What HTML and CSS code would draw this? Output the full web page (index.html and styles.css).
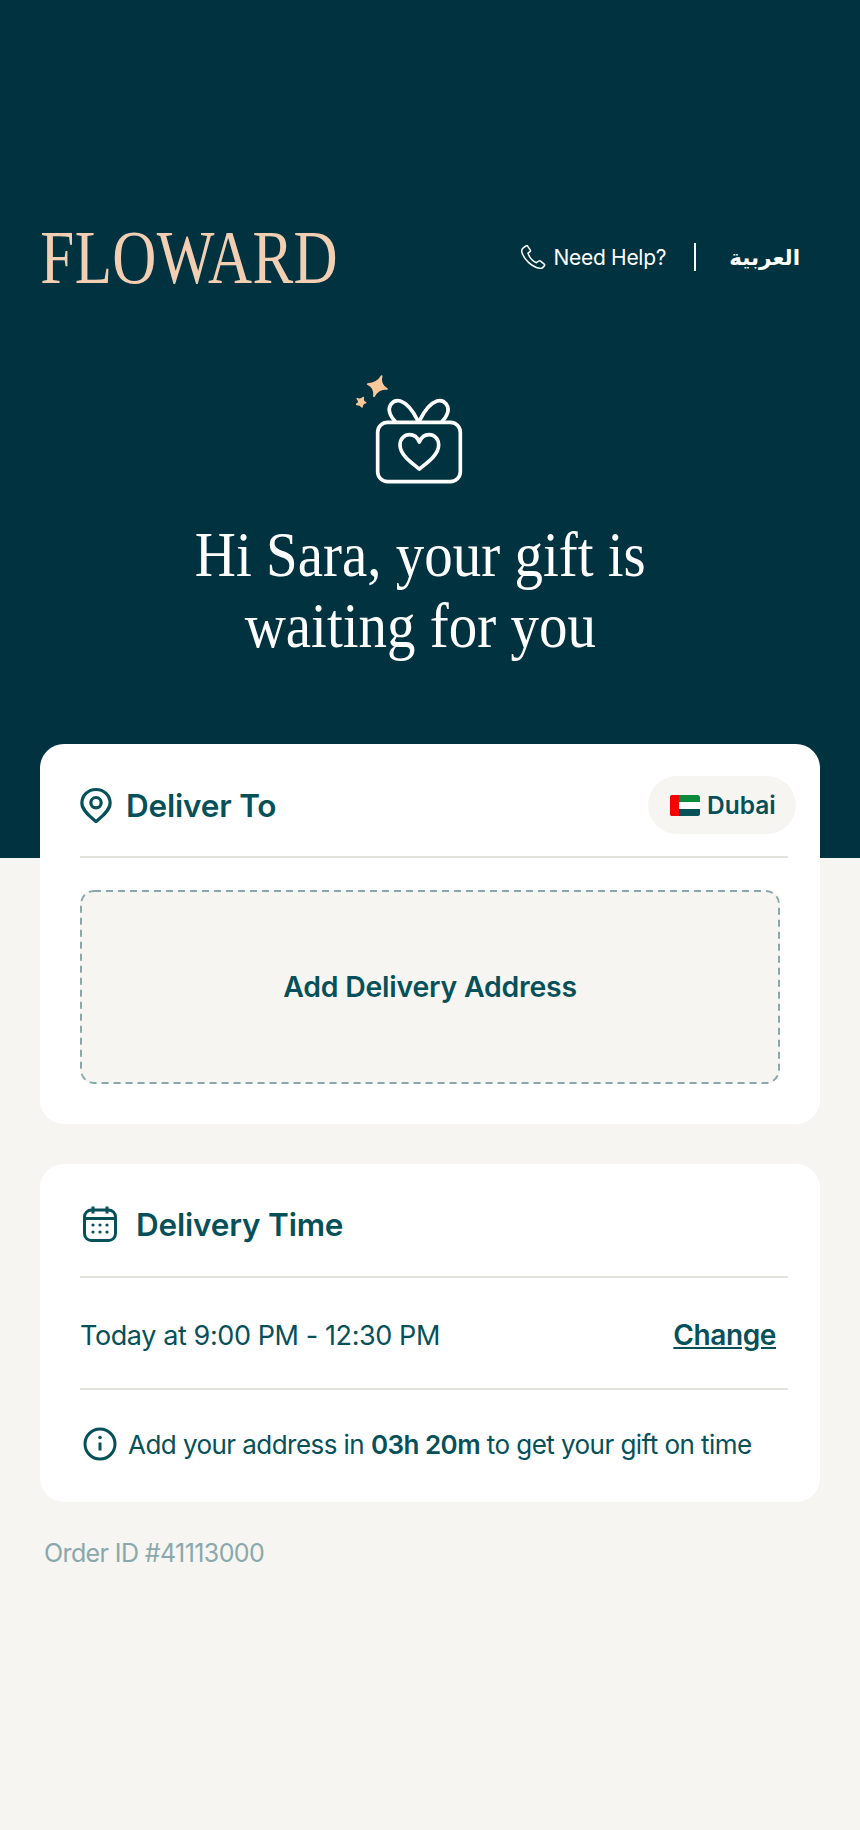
FILE: index.html
```html
<!DOCTYPE html>
<html lang="en">
<head>
<meta charset="utf-8">
<title>Floward</title>
<link rel="stylesheet" href="styles.css">
</head>
<body>
<div class="page">
  <section class="hero">
    <header class="topbar">
      <svg class="logo" width="302" height="90" viewBox="0 0 381 90" preserveAspectRatio="none"><text x="3" y="71" textLength="375" class="logo-text">FLOWARD</text></svg>
      <div class="actions">
        <svg class="phone" width="26" height="24" viewBox="0 0 26 24" fill="none" stroke="#fff" stroke-width="1.5" stroke-linejoin="round"><path d="M2 3.2 5 .9c.7-.4 1.4-.2 1.8.4l2.4 3.6c.4.6.3 1.3-.2 1.7L7 8.200c1.300 4 4.500 7.800 8.400 9.500l2.300-1.700c.6-.4 1.300-.4 1.800.1l3.700 3c.5.5.6 1.200.1 1.800l-1.700 1.700c-.8.800-2 1-3.200.7C10 21.500 2.800 14 .9 7.300.5 5.700 1 4 2 3.200Z"/></svg>
        <span class="help">Need Help?</span>
        <span class="sep"></span>
        <span class="lang" lang="ar" dir="rtl">العربية</span>
      </div>
    </header>
    <svg class="gift" width="140" height="130" viewBox="0 0 420 390" fill="none" stroke="#fff" stroke-width="11" stroke-linejoin="round" stroke-linecap="round">
      <path class="spark" d="M125 33Q118 58 141 72Q116 68 102 94Q106 68 83 57Q112 56 125 33Z"/>
      <path class="spark" d="M70 98Q66 108 77 113Q67 114 66 126Q62 118 50 118Q62 112 52 101Q62 106 70 98Z"/>
      <rect x="113" y="172" width="248" height="178" rx="30"/>
      <path d="M233 166c-12-24-28-50-52-58-24-6-40 18-30 40 3 8 8 14 14 20"/>
      <path d="M239 166c12-24 28-50 52-58 24-6 40 18 30 40-3 8-8 14-14 20"/>
      <path d="M238 312c-22-18-58-42-58-72 0-18 13-31 29-31 13 0 23 8 29 22 6-14 16-22 29-22 16 0 29 13 29 31 0 30-36 54-58 72Z"/>
    </svg>
    <h1 class="title">Hi Sara, your gift is<br>waiting for you</h1>
  </section>

  <main class="cards">
    <section class="card">
      <div class="card-head">
        <svg class="icon pin" width="32" height="37" viewBox="0 0 34 38" fill="none" stroke="#06505a" stroke-width="3.400"><path d="M17 36C11 31 2 24 2 16.500 2 8 8.600 2 17 2s15 6 15 14.500C32 24 23 31 17 36Z" stroke-linejoin="round"/><circle cx="17" cy="16" r="5.500"/></svg>
        <h2 class="card-title">Deliver To</h2>
        <div class="pill">
          <svg class="flag" width="30" height="21" viewBox="0 0 30 21"><defs><clipPath id="flag-clip"><rect width="30" height="21" rx="2.500"/></clipPath></defs><g clip-path="url(#flag-clip)"><rect width="30" height="7" fill="#0b8a3e"/><rect y="7" width="30" height="7" fill="#fff"/><rect y="14" width="30" height="7" fill="#06505a"/><rect width="9" height="21" fill="#fb0000"/></g></svg>
          <span>Dubai</span>
        </div>
      </div>
      <div class="card-body">
        <button class="add-address" type="button">Add Delivery Address</button>
      </div>
    </section>

    <section class="card">
      <div class="card-head time-head">
        <svg class="icon calendar" width="34" height="36" viewBox="0 0 34 36" fill="none" stroke="#06505a" stroke-width="3"><rect x="1.500" y="4" width="31" height="30.500" rx="7"/><path d="M2 12.500h30M10 .5v7M24 .5v7"/><g fill="#06505a" stroke="none"><circle cx="10" cy="19" r="1.600"/><circle cx="17" cy="19" r="1.600"/><circle cx="24" cy="19" r="1.600"/><circle cx="10" cy="26" r="1.600"/><circle cx="17" cy="26" r="1.600"/><circle cx="24" cy="26" r="1.600"/></g></svg>
        <h2 class="card-title">Delivery Time</h2>
      </div>
      <div class="time-row">
        <span>Today at 9:00 PM - 12:30 PM</span>
        <a class="change" href="#">Change</a>
      </div>
      <div class="info-row">
        <svg class="icon info" width="34" height="34" viewBox="0 0 34 34" fill="none" stroke="#06505a" stroke-width="3"><circle cx="17" cy="17" r="15"/><path d="M17 15.500v8"/><circle cx="17" cy="10.500" r="1.800" fill="#06505a" stroke="none"/></svg>
        <p class="info-text">Add your address in <strong>03h 20m</strong> to get your gift on time</p>
      </div>
    </section>
    <p class="order-id">Order ID #41113000</p>
  </main>
</div>
</body>
</html>
```
FILE: styles.css
```css
* { box-sizing: border-box; }
html, body { margin: 0; padding: 0; }
body {
  background: #f6f5f1;
  color: #06505a;
  font-family: Inter, "Noto Sans", sans-serif;
  height: 1830px;
  overflow: hidden;
}
.hero {
  background: #00323f;
  height: 858px;
  padding-top: 227px;
  display: flex;
  flex-direction: column;
  align-items: center;
  color: #fff;
}
.topbar {
  width: 100%;
  height: 60px;
  padding: 0 60px 0 38px;
  display: flex;
  justify-content: space-between;
  align-items: center;
}
.logo-text {
  font-family: "Liberation Serif", serif;
  font-size: 77px;
  fill: #f2cfb2;
}
.actions { display: flex; align-items: center; }
.phone { margin-right: 7px; }
.help { font-size: 21px; letter-spacing: -0.3px; }
.sep { width: 2px; height: 28px; background: #fff; margin: 0 33px 0 28px; }
.lang { font-family: "DejaVu Sans", sans-serif; font-size: 21.5px; font-weight: 700; }
.gift { margin: 78px 40px 0 0; }
.spark { fill: #fcc79b; stroke: #fcc79b; stroke-width: 5; }
.title {
  margin: 24px 20px 0 0;
  font-family: "Liberation Serif", serif;
  font-weight: 400;
  font-size: 64px;
  line-height: 71px;
  text-align: center;
  white-space: nowrap;
  transform: scaleX(0.89);
}
.cards { margin-top: -114px; padding: 0 40px; }
.card { background: #fff; border-radius: 24px; padding: 0 32px 0 40px; margin-bottom: 40px; }
.card-head {
  height: 114px;
  border-bottom: 2px solid #e3e3de;
  display: flex;
  align-items: center;
  padding-top: 10px;
}
.card-title { margin: 0; font-size: 31.5px; font-weight: 600; letter-spacing: -0.2px; }
.pin { margin-right: 14px; }
.pill {
  margin-left: auto;
  margin-right: -8px;
  width: 148px;
  height: 58px;
  border-radius: 29px;
  background: #f6f5f1;
  display: flex;
  align-items: center;
  gap: 7px;
  padding-left: 22px;
  font-size: 24.5px;
  font-weight: 600;
}
.card-body { padding: 32px 8px 40px 0; }
.add-address {
  display: block;
  width: 100%;
  height: 194px;
  padding: 0 0 2px;
  border: 0;
  border-radius: 14px;
  background: #f6f5f1 url("data:image/svg+xml,%3Csvg xmlns='http://www.w3.org/2000/svg' width='700' height='194'%3E%3Crect x='1' y='1' width='698' height='192' rx='13' fill='none' stroke='%238aa8ac' stroke-width='2' stroke-dasharray='7 5'/%3E%3C/svg%3E") no-repeat;
  color: inherit;
  font: 600 28.4px Inter, sans-serif;
  letter-spacing: -0.2px;
}
.time-head { padding: 8px 0 0 3px; }
.calendar { margin-right: 19px; }
.time-row {
  height: 112px;
  border-bottom: 2px solid #e3e3de;
  display: flex;
  align-items: center;
  justify-content: space-between;
  padding: 4px 12px 0 0;
  font-size: 27px;
  letter-spacing: -0.4px;
}
.change { color: inherit; font-weight: 600; font-size: 28px; }
.info-row { height: 112px; display: flex; align-items: center; padding: 0 0 4px 3px; }
.info { margin-right: 11px; }
.info-text { margin: 0; font-size: 26px; letter-spacing: -0.55px; white-space: nowrap; }
.info-text strong { font-weight: 600; }
.order-id { margin: -4px 0 0 4px; font-size: 25px; color: #8aa8ac; letter-spacing: -0.6px; }
```
